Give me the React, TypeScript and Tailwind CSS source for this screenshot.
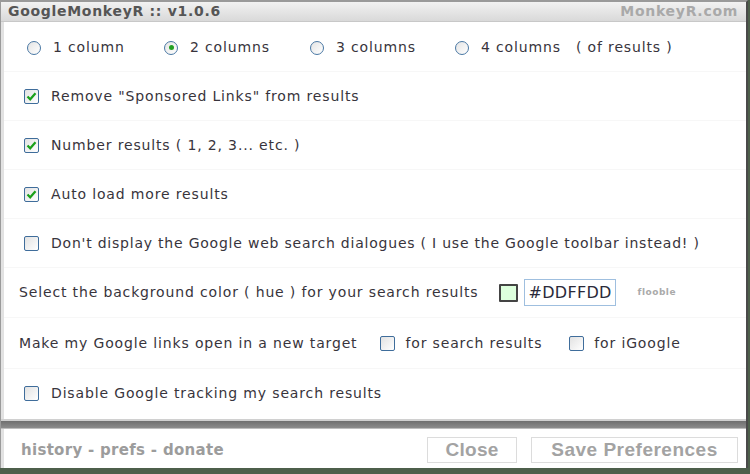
import React from 'react';

const Radio = ({ checked }: { checked?: boolean }) => (
  <span className="w-[14px] h-[14px] rounded-full border-[1.5px] border-[#4a78a4] bg-gradient-to-br from-[#e4e4e4] to-white flex items-center justify-center shrink-0">
    {checked && <span className="w-[5px] h-[5px] rounded-full bg-[#22a022]" />}
  </span>
);

const Check = ({ checked }: { checked?: boolean }) => (
  <span className="w-[15px] h-[15px] rounded-[2px] border-[1.5px] border-[#3f6d9b] bg-gradient-to-br from-[#e2e2e2] to-white flex items-center justify-center shrink-0">
    {checked && (
      <svg width="11" height="11" viewBox="0 0 11 11">
        <path d="M1.5 5.5 L4.2 8.3 L9.5 2.2" fill="none" stroke="#1aa01a" strokeWidth="2.2" />
      </svg>
    )}
  </span>
);

const Row = ({ children, line = true, h = 'h-[49px]' }: { children: React.ReactNode; line?: boolean; h?: string }) => (
  <div className={`${h} flex items-center ${line ? 'border-b border-[#f7f7f7]' : ''}`}>{children}</div>
);

export default function App() {
  return (
    <div className="w-[750px] h-[474px] bg-[#4d5f4b] overflow-hidden text-[14px] tracking-[0.85px] text-[#38343c]" style={{ fontFamily: '"DejaVu Sans", Verdana, sans-serif' }}>
      <div className="w-[748px] h-[468px] bg-white border-t-2 border-l border-[#9a9a9a] border-r-[2px] border-r-[#4a4a4a] flex flex-col">
        {/* title bar */}
        <div className="h-[20px] bg-gradient-to-b from-[#f2f2f2] to-[#d9d9d9] flex items-center justify-between px-[7px] border-b border-[#c8c8c8] tracking-[0.7px]">
          <span className="font-bold text-[14px] text-[#555]">GoogleMonkeyR :: v1.0.6</span>
          <span className="font-bold text-[14px] text-[#a9a9a9] mr-[1px]">MonkeyR.com</span>
        </div>

        {/* content */}
        <div className="flex-1 border-l-[3px] border-[#e2e2e2] flex flex-col pt-[2px]">
          <Row h="h-[48px]">
            <div className="flex items-center pl-[23px]">
              <span className="flex items-center gap-[12px] w-[137px]"><Radio /><span>1 column</span></span>
              <span className="flex items-center gap-[12px] w-[146px]"><Radio checked /><span>2 columns</span></span>
              <span className="flex items-center gap-[12px] w-[145px]"><Radio /><span>3 columns</span></span>
              <span className="flex items-center gap-[12px] w-[121px]"><Radio /><span>4 columns</span></span>
              <span>( of results )</span>
            </div>
          </Row>
          <Row>
            <div className="flex items-center gap-[12px] pl-[20px]"><Check checked /><span>Remove "Sponsored Links" from results</span></div>
          </Row>
          <Row>
            <div className="flex items-center gap-[12px] pl-[20px]"><Check checked /><span>Number results ( 1, 2, 3... etc. )</span></div>
          </Row>
          <Row>
            <div className="flex items-center gap-[12px] pl-[20px]"><Check checked /><span>Auto load more results</span></div>
          </Row>
          <Row>
            <div className="flex items-center gap-[12px] pl-[20px] tracking-[0.78px]"><Check /><span>Don't display the Google web search dialogues ( I use the Google toolbar instead! )</span></div>
          </Row>
          <Row h="h-[50px]">
            <div className="flex items-center pl-[15px]">
              <span>Select the background color ( hue ) for your search results</span>
              <span className="ml-[20px] w-[19px] h-[18px] border-2 border-[#444] bg-[#DDFFDD] rounded-[1px]" />
              <span className="ml-[6px] w-[92px] h-[27px] border border-[#9fbfdf] flex items-center px-[4px] text-[16px] tracking-[0.3px] text-[#2a2a3a]">#DDFFDD</span>
              <span className="ml-[22px] text-[9px] font-bold tracking-[0.5px] text-[#aaa]">flooble</span>
            </div>
          </Row>
          <Row h="h-[51px]">
            <div className="flex items-center pl-[15px]">
              <span>Make my Google links open in a new target</span>
              <span className="ml-[23px] flex items-center gap-[10px]"><Check /><span>for search results</span></span>
              <span className="ml-[27px] flex items-center gap-[10px]"><Check /><span>for iGoogle</span></span>
            </div>
          </Row>
          <Row line={false}>
            <div className="flex items-center gap-[12px] pl-[20px]"><Check /><span>Disable Google tracking my search results</span></div>
          </Row>
        </div>

        {/* divider */}
        <div className="h-[10px] border-t-2 border-[#d0d0d0] bg-gradient-to-b from-[#6f6f6f] to-[#8c8c8c] border-b border-b-[#bdbdbd]" />

        {/* footer */}
        <div className="h-[39px] flex items-center justify-between pl-[17px] pr-[8px] border-l-[3px] border-[#e2e2e2]">
          <span className="font-bold text-[15px] tracking-[0.3px] text-[#9c9c9c] pt-[4px]">history - prefs - donate</span>
          <div className="flex items-center gap-[14px] tracking-normal pt-[2px]" style={{ fontFamily: '"Liberation Sans", Arial, sans-serif' }}>
            <button className="w-[90px] h-[26px] border border-[#dcdcdc] bg-white font-bold text-[19px] leading-none tracking-[0.3px] text-[#a3a3a3]">Close</button>
            <button className="w-[207px] h-[26px] border border-[#dcdcdc] bg-white font-bold text-[19px] leading-none tracking-[0.5px] text-[#a3a3a3]">Save Preferences</button>
          </div>
        </div>
      </div>
    </div>
  );
}
